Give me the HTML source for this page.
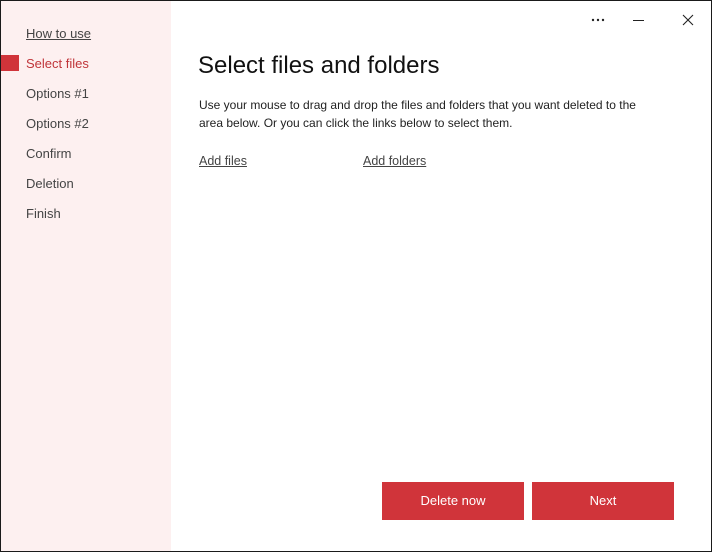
<!DOCTYPE html>
<html><head><style>
*{margin:0;padding:0;box-sizing:border-box}
body{width:712px;height:552px;overflow:hidden;background:#fff;font-family:"Liberation Sans",sans-serif;position:relative}
.win{position:absolute;left:0;top:0;width:712px;height:552px;border:1px solid #1a1a1a}
.side{position:absolute;left:1px;top:1px;width:170px;height:550px;background:#fdf0f0}
.nav{position:absolute;left:26px;font-size:13px;color:#444}
.mark{position:absolute;left:1px;top:55px;width:18px;height:16px;background:#d0343a}
h1{position:absolute;left:198px;top:52px;font-size:24px;font-weight:normal;color:#111}
.p{position:absolute;left:199px;top:96px;font-size:12px;line-height:18px;color:#222;width:458px}
.lnk{position:absolute;top:154px;font-size:12.5px;color:#444;text-decoration:underline}
.btn{position:absolute;top:482px;width:142px;height:38px;background:#d0343a;color:#fff;font-size:13px;text-align:center;line-height:38px}
</style></head><body>
<div class="win"></div>
<div class="side"></div>
<div class="mark"></div>
<div class="nav" style="top:26px;text-decoration:underline">How to use</div>
<div class="nav" style="top:56px;color:#c0353a">Select files</div>
<div class="nav" style="top:86px">Options #1</div>
<div class="nav" style="top:116px">Options #2</div>
<div class="nav" style="top:146px">Confirm</div>
<div class="nav" style="top:176px">Deletion</div>
<div class="nav" style="top:206px">Finish</div>
<svg style="position:absolute;left:590px;top:12px" width="110" height="16">
<circle cx="3" cy="8" r="1.2" fill="#222"/><circle cx="8" cy="8" r="1.2" fill="#222"/><circle cx="13" cy="8" r="1.2" fill="#222"/>
<line x1="43" y1="8.5" x2="54" y2="8.5" stroke="#222" stroke-width="1"/>
<path d="M93 3L103 13M103 3L93 13" stroke="#222" stroke-width="1.1"/>
</svg>
<h1>Select files and folders</h1>
<div class="p">Use your mouse to drag and drop the files and folders that you want deleted to the area below. Or you can click the links below to select them.</div>
<div class="lnk" style="left:199px">Add files</div>
<div class="lnk" style="left:363px">Add folders</div>
<div class="btn" style="left:382px">Delete now</div>
<div class="btn" style="left:532px">Next</div>
</body></html>
